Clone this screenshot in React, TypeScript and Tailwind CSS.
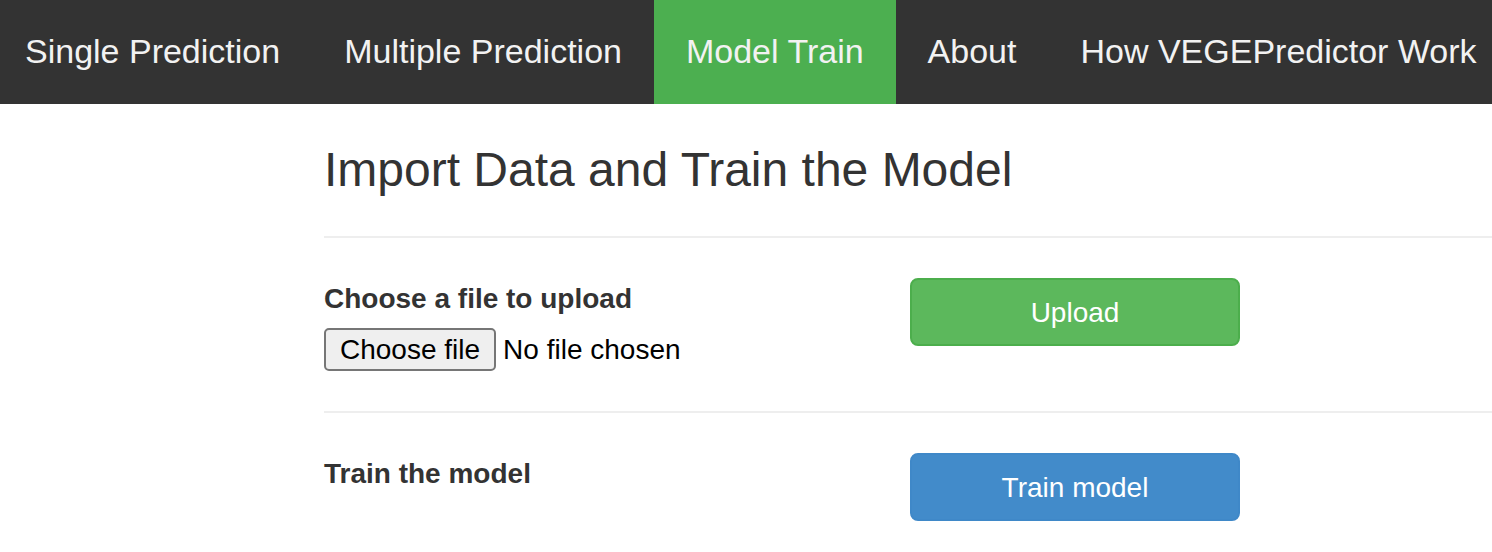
export default function App() {
    const tabs = ["Single Prediction", "Multiple Prediction", "Model Train", "About", "How VEGEPredictor Work"];

    return (
        <div className="min-h-screen bg-white text-[#333] font-['Liberation_Sans',Arial,sans-serif] overflow-hidden">
            <nav className="h-[104px] bg-[#333] flex whitespace-nowrap">
                {tabs.map((t, i) => (
                    <a
                        key={t}
                        className={
                            (t === "Model Train" ? "bg-[#4caf50] " : "") +
                            (i === 0 ? "pl-[25px] " : "pl-[32px] ") +
                            "pr-[32px] flex items-center text-[34px] text-[#f2f2f2] pb-[2px]"
                        }
                    >
                        {t}
                    </a>
                ))}
            </nav>

            <main className="pl-[324px]">
                <h3 className="mt-[40px] text-[48px] leading-[1.1] font-normal">
                    Import Data and Train the Model
                </h3>

                <hr className="mt-[39px] border-0 border-t-2 border-[#eee]" />

                <div className="mt-[40px] flex">
                    <div className="w-[586px]">
                        <label className="block text-[28px] leading-[40px] font-bold pt-[1px]">
                            Choose a file to upload
                        </label>
                        <div className="mt-[9px] h-[43px] flex items-center text-[28px] text-black">
                            <span className="h-[43px] px-[14px] pt-[2px] flex items-center bg-[#efefef] border-2 border-[#767676] rounded-[5px]">
                                Choose file
                            </span>
                            <span className="ml-[7px] pt-[2px]">No file chosen</span>
                        </div>
                    </div>
                    <button className="w-[330px] h-[68px] pt-[2px] bg-[#5cb85c] border-2 border-[#4cae4c] rounded-[8px] text-white text-[28px]">
                        Upload
                    </button>
                </div>

                <hr className="mt-[40px] border-0 border-t-2 border-[#eee]" />

                <div className="mt-[40px] flex">
                    <div className="w-[586px]">
                        <label className="block text-[28px] leading-[40px] font-bold pt-[1px]">
                            Train the model
                        </label>
                    </div>
                    <button className="w-[330px] h-[68px] pt-[3px] bg-[#428bca] border-2 border-[#3f88c8] rounded-[8px] text-white text-[28px]">
                        Train model
                    </button>
                </div>
            </main>
        </div>
    );
}
